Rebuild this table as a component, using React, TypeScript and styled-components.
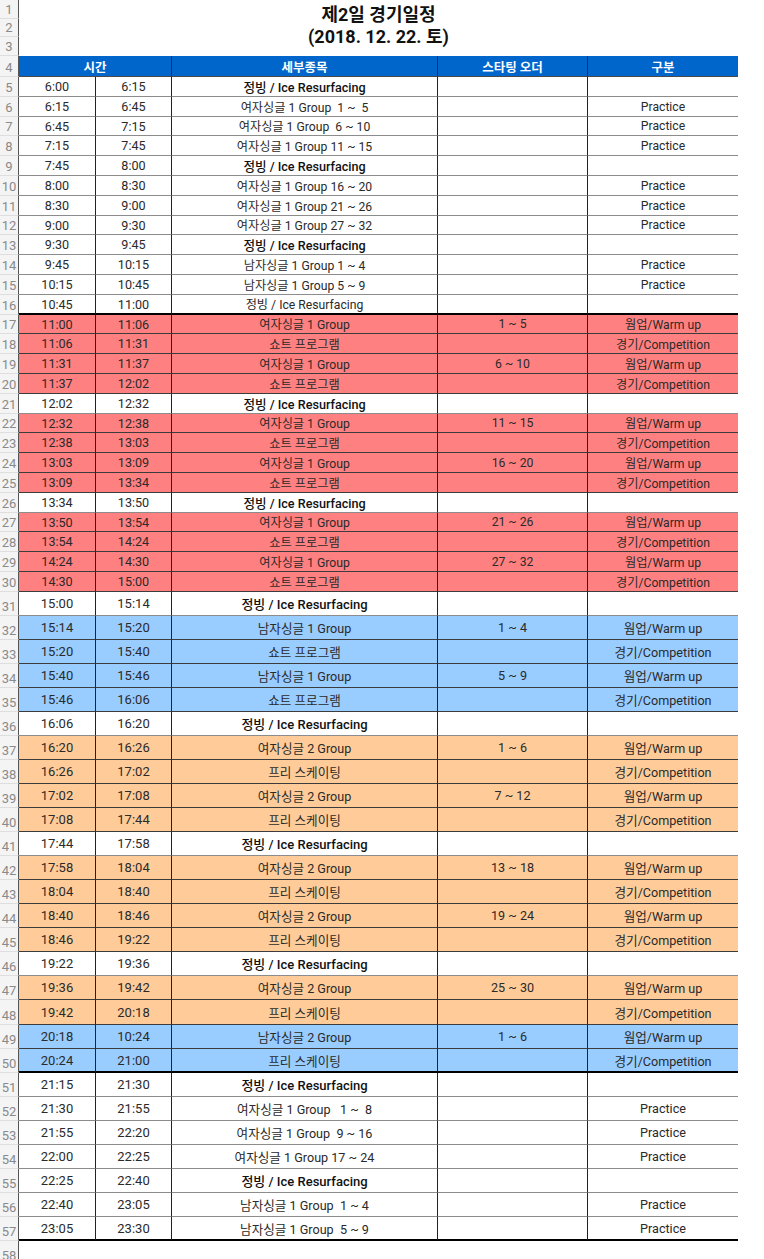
import React from 'react';
import styled, { createGlobalStyle, css } from 'styled-components';

const GlobalStyle = createGlobalStyle`
  html, body {
    margin: 0;
    padding: 0;
    background: #ffffff;
  }
  body {
    font-family: Roboto, "Noto Sans CJK KR", sans-serif;
    color: #222;
    overflow: hidden;
  }
`;

type Tone = 'white' | 'red' | 'blue' | 'orange';

const toneBg: Record<Tone, string> = {
  white: '#ffffff',
  red: '#ff8080',
  blue: '#99ccff',
  orange: '#ffcc99',
};

const COLS = '19px 77px 76px 266px 150px 150px';

const Sheet = styled.div`
  width: 764px;
  display: flex;
  flex-direction: column;
`;

const TitleBlock = styled.div`
  display: grid;
  grid-template-columns: 19px 719px;
  height: 56px;
`;

const NumStack = styled.div`
  display: grid;
  grid-template-rows: 19px 18px 19px;
`;

const Title = styled.div`
  display: flex;
  flex-direction: column;
  align-items: center;
  padding-top: 4px;
  font-weight: 700;
  font-size: 18px;
  line-height: 22px;
  color: #111;
`;

const RowNum = styled.div`
  box-sizing: border-box;
  background: #f4f4f4;
  border-right: 1px solid #555;
  border-bottom: 1px solid #dedede;
  color: #8a8a8a;
  font-size: 13px;
  display: flex;
  align-items: flex-end;
  justify-content: center;
  padding-bottom: 1px;
`;

const Row = styled.div<{ $h: number; $tone: Tone; $thick?: boolean }>`
  display: grid;
  grid-template-columns: ${COLS};
  height: ${(p) => p.$h}px;
  --bg: ${(p) => toneBg[p.$tone]};
  --line: ${(p) => (p.$thick ? '#000' : p.$tone === 'white' ? '#8c8c8c' : '#3c3c3c')};
  --lw: ${(p) => (p.$thick ? '2px' : '1px')};
`;

const HeaderRow = styled.div`
  display: grid;
  grid-template-columns: 19px 153px 266px 150px 150px;
  height: 21px;
`;

const HeadCell = styled.div<{ $last?: boolean }>`
  box-sizing: border-box;
  background: #0066cc;
  color: #fff;
  font-weight: 700;
  font-size: 12.5px;
  display: flex;
  align-items: center;
  justify-content: center;
  border-bottom: 1px solid #4a4a4a;
  ${(p) => !p.$last && css`border-right: 1px solid #2a2a2a;`}
`;

const Cell = styled.div<{ $last?: boolean; $bold?: boolean; $size: number }>`
  box-sizing: border-box;
  display: flex;
  align-items: center;
  justify-content: center;
  white-space: pre;
  background: var(--bg);
  font-size: ${(p) => (p.$bold ? p.$size + 0.4 : p.$size)}px;
  font-weight: ${(p) => (p.$bold ? 500 : 400)};
  color: ${(p) => (p.$bold ? '#111' : '#2a2a2a')};
  border-bottom: var(--lw) solid var(--line);
  ${(p) => !p.$last && css`border-right: 1px solid #222;`}
`;

const TimeCell = styled(Cell)`
  font-size: ${(p) => p.$size + 0.4}px;
`;

type Entry = {
  n: number;
  a: string;
  b: string;
  c: string;
  d?: string;
  e?: string;
  tone?: Tone;
  bold?: boolean;
  thick?: boolean;
};

const ICE = '정빙 / Ice Resurfacing';
const WU = '웜업/Warm up';
const CP = '경기/Competition';
const SP = '쇼트 프로그램';
const FS = '프리 스케이팅';
const PR = 'Practice';

const rows: Entry[] = [
  { n: 5, a: '6:00', b: '6:15', c: ICE, bold: true },
  { n: 6, a: '6:15', b: '6:45', c: '여자싱글 1 Group  1 ~  5', e: PR },
  { n: 7, a: '6:45', b: '7:15', c: '여자싱글 1 Group  6 ~ 10', e: PR },
  { n: 8, a: '7:15', b: '7:45', c: '여자싱글 1 Group 11 ~ 15', e: PR },
  { n: 9, a: '7:45', b: '8:00', c: ICE, bold: true },
  { n: 10, a: '8:00', b: '8:30', c: '여자싱글 1 Group 16 ~ 20', e: PR },
  { n: 11, a: '8:30', b: '9:00', c: '여자싱글 1 Group 21 ~ 26', e: PR },
  { n: 12, a: '9:00', b: '9:30', c: '여자싱글 1 Group 27 ~ 32', e: PR },
  { n: 13, a: '9:30', b: '9:45', c: ICE, bold: true },
  { n: 14, a: '9:45', b: '10:15', c: '남자싱글 1 Group 1 ~ 4', e: PR },
  { n: 15, a: '10:15', b: '10:45', c: '남자싱글 1 Group 5 ~ 9', e: PR },
  { n: 16, a: '10:45', b: '11:00', c: ICE, thick: true },
  { n: 17, a: '11:00', b: '11:06', c: '여자싱글 1 Group', d: '1 ~ 5', e: WU, tone: 'red' },
  { n: 18, a: '11:06', b: '11:31', c: SP, e: CP, tone: 'red' },
  { n: 19, a: '11:31', b: '11:37', c: '여자싱글 1 Group', d: '6 ~ 10', e: WU, tone: 'red' },
  { n: 20, a: '11:37', b: '12:02', c: SP, e: CP, tone: 'red' },
  { n: 21, a: '12:02', b: '12:32', c: ICE, bold: true },
  { n: 22, a: '12:32', b: '12:38', c: '여자싱글 1 Group', d: '11 ~ 15', e: WU, tone: 'red' },
  { n: 23, a: '12:38', b: '13:03', c: SP, e: CP, tone: 'red' },
  { n: 24, a: '13:03', b: '13:09', c: '여자싱글 1 Group', d: '16 ~ 20', e: WU, tone: 'red' },
  { n: 25, a: '13:09', b: '13:34', c: SP, e: CP, tone: 'red' },
  { n: 26, a: '13:34', b: '13:50', c: ICE, bold: true },
  { n: 27, a: '13:50', b: '13:54', c: '여자싱글 1 Group', d: '21 ~ 26', e: WU, tone: 'red' },
  { n: 28, a: '13:54', b: '14:24', c: SP, e: CP, tone: 'red' },
  { n: 29, a: '14:24', b: '14:30', c: '여자싱글 1 Group', d: '27 ~ 32', e: WU, tone: 'red' },
  { n: 30, a: '14:30', b: '15:00', c: SP, e: CP, tone: 'red' },
  { n: 31, a: '15:00', b: '15:14', c: ICE, bold: true },
  { n: 32, a: '15:14', b: '15:20', c: '남자싱글 1 Group', d: '1 ~ 4', e: WU, tone: 'blue' },
  { n: 33, a: '15:20', b: '15:40', c: SP, e: CP, tone: 'blue' },
  { n: 34, a: '15:40', b: '15:46', c: '남자싱글 1 Group', d: '5 ~ 9', e: WU, tone: 'blue' },
  { n: 35, a: '15:46', b: '16:06', c: SP, e: CP, tone: 'blue' },
  { n: 36, a: '16:06', b: '16:20', c: ICE, bold: true },
  { n: 37, a: '16:20', b: '16:26', c: '여자싱글 2 Group', d: '1 ~ 6', e: WU, tone: 'orange' },
  { n: 38, a: '16:26', b: '17:02', c: FS, e: CP, tone: 'orange' },
  { n: 39, a: '17:02', b: '17:08', c: '여자싱글 2 Group', d: '7 ~ 12', e: WU, tone: 'orange' },
  { n: 40, a: '17:08', b: '17:44', c: FS, e: CP, tone: 'orange' },
  { n: 41, a: '17:44', b: '17:58', c: ICE, bold: true },
  { n: 42, a: '17:58', b: '18:04', c: '여자싱글 2 Group', d: '13 ~ 18', e: WU, tone: 'orange' },
  { n: 43, a: '18:04', b: '18:40', c: FS, e: CP, tone: 'orange' },
  { n: 44, a: '18:40', b: '18:46', c: '여자싱글 2 Group', d: '19 ~ 24', e: WU, tone: 'orange' },
  { n: 45, a: '18:46', b: '19:22', c: FS, e: CP, tone: 'orange' },
  { n: 46, a: '19:22', b: '19:36', c: ICE, bold: true },
  { n: 47, a: '19:36', b: '19:42', c: '여자싱글 2 Group', d: '25 ~ 30', e: WU, tone: 'orange' },
  { n: 48, a: '19:42', b: '20:18', c: FS, e: CP, tone: 'orange' },
  { n: 49, a: '20:18', b: '10:24', c: '남자싱글 2 Group', d: '1 ~ 6', e: WU, tone: 'blue' },
  { n: 50, a: '20:24', b: '21:00', c: FS, e: CP, tone: 'blue', thick: true },
  { n: 51, a: '21:15', b: '21:30', c: ICE, bold: true },
  { n: 52, a: '21:30', b: '21:55', c: '여자싱글 1 Group   1 ~  8', e: PR },
  { n: 53, a: '21:55', b: '22:20', c: '여자싱글 1 Group  9 ~ 16', e: PR },
  { n: 54, a: '22:00', b: '22:25', c: '여자싱글 1 Group 17 ~ 24', e: PR },
  { n: 55, a: '22:25', b: '22:40', c: ICE, bold: true },
  { n: 56, a: '22:40', b: '23:05', c: '남자싱글 1 Group  1 ~ 4', e: PR },
  { n: 57, a: '23:05', b: '23:30', c: '남자싱글 1 Group  5 ~ 9', e: PR, thick: true },
];

const EmptyRow = styled.div`
  display: grid;
  grid-template-columns: 19px;
  height: 24px;
`;

// row edges in sheet pixels: 26 short rows from y=77, then 27 tall rows
const rowTop = (n: number) => {
  const i = n - 5;
  if (i <= 26) return 77 + i * 19.8;
  return 77 + 26 * 19.8 + (i - 26) * 24.04;
};

const App = () => {
  return (
    <Sheet>
      <GlobalStyle />
      <TitleBlock>
        <NumStack>
          <RowNum>1</RowNum>
          <RowNum>2</RowNum>
          <RowNum>3</RowNum>
        </NumStack>
        <Title>
          <span>제2일 경기일정</span>
          <span>(2018. 12. 22. 토)</span>
        </Title>
      </TitleBlock>
      <HeaderRow>
        <RowNum>4</RowNum>
        <HeadCell>시간</HeadCell>
        <HeadCell>세부종목</HeadCell>
        <HeadCell>스타팅 오더</HeadCell>
        <HeadCell $last>구분</HeadCell>
      </HeaderRow>
      {rows.map((r) => {
        const tall = r.n >= 31;
        const h = Math.round(rowTop(r.n + 1)) - Math.round(rowTop(r.n));
        const size = tall ? 12.6 : 12.2;
        return (
          <Row key={r.n} $h={h} $tone={r.tone ?? 'white'} $thick={r.thick}>
            <RowNum>{r.n}</RowNum>
            <TimeCell $size={size}>{r.a}</TimeCell>
            <TimeCell $size={size}>{r.b}</TimeCell>
            <Cell $size={size} $bold={r.bold}>{r.c}</Cell>
            <Cell $size={size}>{r.d ?? ''}</Cell>
            <Cell $size={size} $last>{r.e ?? ''}</Cell>
          </Row>
        );
      })}
      <EmptyRow>
        <RowNum>58</RowNum>
      </EmptyRow>
    </Sheet>
  );
};

export default App;
